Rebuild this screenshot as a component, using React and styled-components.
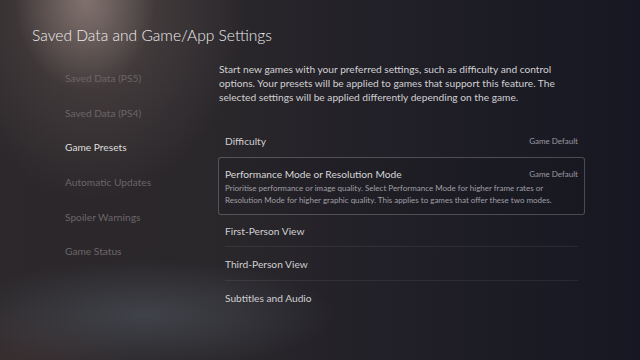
import React from "react";
import styled, { createGlobalStyle } from "styled-components";

const GlobalStyle = createGlobalStyle`
  html, body {
    margin: 0;
    padding: 0;
    width: 640px;
    height: 360px;
    overflow: hidden;
  }
  body {
    font-family: Lato, "Open Sans", "Liberation Sans", sans-serif;
    background-color: #1d1c23;
    background-image:
      radial-gradient(ellipse 70px 90px at 85px 0px, rgba(150, 132, 126, 0.7), rgba(150, 132, 126, 0) 100%),
      radial-gradient(ellipse 150px 190px at 95px 10px, rgba(110, 96, 92, 0.55), rgba(110, 96, 92, 0) 100%),
      radial-gradient(ellipse 190px 55px at 145px 315px, rgba(90, 100, 110, 0.45), rgba(90, 100, 110, 0) 100%),
      radial-gradient(ellipse 120px 60px at 20px 360px, rgba(80, 60, 60, 0.35), rgba(80, 60, 60, 0) 100%),
      linear-gradient(90deg, #2c282b 0%, #2a272b 35%, #201f27 65%, #161722 100%);
  }
`;

const Page = styled.div`
  width: 640px;
  height: 360px;
  box-sizing: border-box;
  padding: 25px 0 0 32px;
  color: #e4e4e4;
`;

const Title = styled.h1`
  margin: 0;
  font-size: 15.6px;
  line-height: 20px;
  font-weight: 300;
  color: #ececec;
`;

const Main = styled.div`
  display: flex;
  margin-top: 16px;
`;

const Sidebar = styled.ul`
  list-style: none;
  margin: 0;
  padding: 0 0 0 33px;
  width: 186px;
  box-sizing: border-box;
`;

const NavItem = styled.li`
  height: 34.6px;
  display: flex;
  align-items: center;
  font-size: 10.2px;
  color: ${(p) => (p.$active ? "#dedede" : "#6b6568")};
`;

const Content = styled.div`
  width: 367px;
`;

const Intro = styled.p`
  margin: 0 0 20px 1px;
  padding-top: 1px;
  font-size: 10.2px;
  line-height: 14px;
  color: #d0d0d3;
`;

const Row = styled.div`
  display: flex;
  align-items: center;
  justify-content: space-between;
  height: ${(p) => p.$h || 33}px;
  margin: 0 7px;
  border-bottom: ${(p) => (p.$line ? "1px solid rgba(255,255,255,0.07)" : "none")};
  font-size: 10.2px;
  color: #cfcfd2;
`;

const Value = styled.span`
  font-size: 8px;
  color: #9a99a1;
`;

const Card = styled.div`
  border: 1px solid rgba(255, 255, 255, 0.22);
  border-radius: 3px;
  padding: 8px 6px 8px 6px;
  background: rgba(20, 20, 28, 0.18);
`;

const CardHead = styled.div`
  display: flex;
  justify-content: space-between;
  align-items: center;
  height: 16px;
  font-size: 10.2px;
  color: #d6d6d8;
`;

const CardText = styled.p`
  margin: 0;
  font-size: 8px;
  line-height: 12px;
  color: #a09fa5;
  white-space: nowrap;
`;

const navItems = [
  "Saved Data (PS5)",
  "Saved Data (PS4)",
  "Game Presets",
  "Automatic Updates",
  "Spoiler Warnings",
  "Game Status",
];

export default function App() {
  return (
    <>
      <GlobalStyle />
      <Page>
        <Title>Saved Data and Game/App Settings</Title>
        <Main>
          <Sidebar>
            {navItems.map((n) => (
              <NavItem key={n} $active={n === "Game Presets"}>
                {n}
              </NavItem>
            ))}
          </Sidebar>
          <Content>
            <Intro>
              Start new games with your preferred settings, such as difficulty and control
              options. Your presets will be applied to games that support this feature. The
              selected settings will be applied differently depending on the game.
            </Intro>
            <Row>
              <span>Difficulty</span>
              <Value>Game Default</Value>
            </Row>
            <Card>
              <CardHead>
                <span>Performance Mode or Resolution Mode</span>
                <Value>Game Default</Value>
              </CardHead>
              <CardText>
                Prioritise performance or image quality. Select Performance Mode for higher frame rates or
                <br />
                Resolution Mode for higher graphic quality. This applies to games that offer these two modes.
              </CardText>
            </Card>
            <Row $line $h={31}>First-Person View</Row>
            <Row $line>Third-Person View</Row>
            <Row>Subtitles and Audio</Row>
          </Content>
        </Main>
      </Page>
    </>
  );
}
